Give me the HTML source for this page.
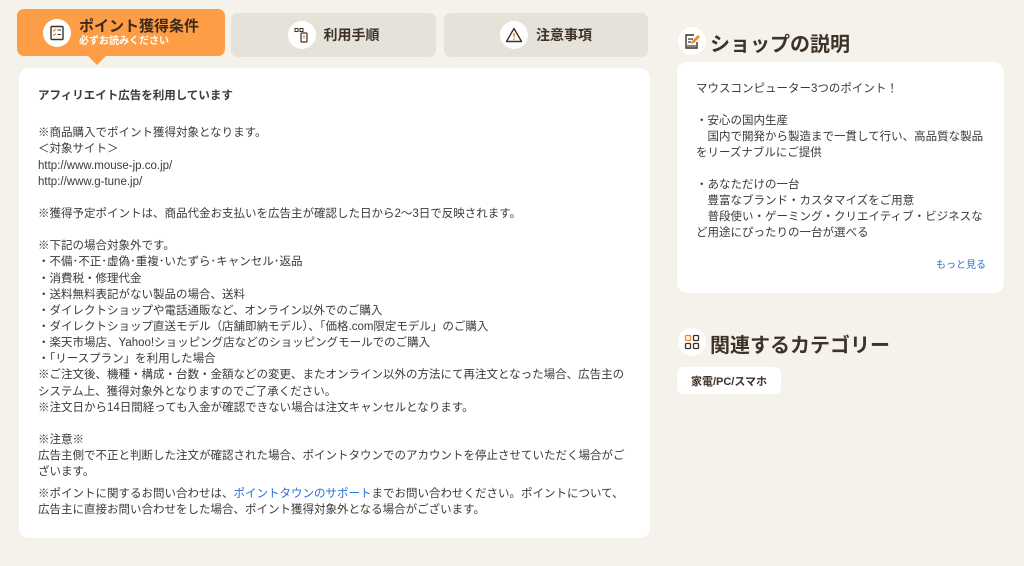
<!DOCTYPE html>
<html><head><meta charset="utf-8"><style>
*{margin:0;padding:0;box-sizing:border-box}
body{width:1024px;height:566px;background:#f5f2eb;font-family:"Liberation Sans","Noto Sans CJK JP",sans-serif;color:#3a3a3a;position:relative;overflow:hidden}
.abs{position:absolute}
.tab{position:absolute;border-radius:7px;display:flex;align-items:center;justify-content:center;font-weight:bold;font-size:14px;color:#3d3128}
.circ{width:28px;height:28px;border-radius:50%;background:#fff;display:flex;align-items:center;justify-content:center}
.card{position:absolute;background:#fff;border-radius:10px}
.t{position:absolute;font-size:11.5px;white-space:nowrap;line-height:14px}
.h{position:absolute;font-size:20px;font-weight:bold;color:#3d3128;white-space:nowrap}
</style></head><body>
<div class="tab" style="left:17px;top:9px;width:208px;height:47px;background:#fd9d45;justify-content:flex-start;padding-left:26px;color:#3d2a1a">
 <div class="circ"><svg width="16" height="16" viewBox="0 0 16 16"><rect x="2" y="1.5" width="12" height="13" rx="1" fill="none" stroke="#3d3128" stroke-width="1.4"/><path d="M4 5l1 1 2-2M4 9.5l1 1 2-2" stroke="#f08a2a" stroke-width="1.1" fill="none"/><path d="M8.5 5h3.5M8.5 9.5h3.5" stroke="#3d3128" stroke-width="1.1"/></svg></div>
 <div style="margin-left:8px;line-height:1"><div style="font-size:15px">ポイント獲得条件</div><div style="font-size:10px;color:#fff;margin-top:3px">必ずお読みください</div></div>
</div>
<div class="abs" style="left:88px;top:56px;width:0;height:0;border-left:9px solid transparent;border-right:9px solid transparent;border-top:9px solid #fd9d45"></div>
<div class="tab" style="left:231px;top:13px;width:205px;height:44px;background:#e5e2da"><div class="circ" style="margin-right:8px"><svg width="16" height="16" viewBox="0 0 16 16"><rect x="1" y="1.5" width="3" height="3" fill="none" stroke="#3d3128"/><rect x="6" y="1.5" width="3" height="3" fill="none" stroke="#3d3128"/><rect x="7" y="6" width="6" height="9" rx="1" fill="none" stroke="#3d3128" stroke-width="1.2"/><path d="M8.5 9h3M8.5 11h3" stroke="#f08a2a"/></svg></div>利用手順</div>
<div class="tab" style="left:444px;top:13px;width:204px;height:44px;background:#e5e2da"><div class="circ" style="margin-right:8px"><svg width="18" height="16" viewBox="0 0 18 16"><path d="M9 1.5L16.5 14.5H1.5Z" fill="none" stroke="#3d3128" stroke-width="1.4" stroke-linejoin="round"/><path d="M9 6v4.5" stroke="#f08a2a" stroke-width="1.5"/><circle cx="9" cy="12.3" r=".9" fill="#f08a2a"/></svg></div>注意事項</div>

<div class="card" style="left:19px;top:68px;width:631px;height:470px"></div>
<div class="t" style="left:38px;top:89px;font-weight:bold">アフィリエイト広告を利用しています</div>
<div class="t" style="left:38px;top:126px">※商品購入でポイント獲得対象となります。</div>
<div class="t" style="left:38px;top:142px">＜対象サイト＞</div>
<div class="t" style="left:38px;top:159px">http://www.mouse-jp.co.jp/</div>
<div class="t" style="left:38px;top:175px">http://www.g-tune.jp/</div>
<div class="t" style="left:38px;top:207px">※獲得予定ポイントは、商品代金お支払いを広告主が確認した日から2〜3日で反映されます。</div>
<div class="t" style="left:38px;top:239px">※下記の場合対象外です。</div>
<div class="t" style="left:38px;top:255px">・不備･不正･虚偽･重複･いたずら･キャンセル･返品</div>
<div class="t" style="left:38px;top:272px">・消費税・修理代金</div>
<div class="t" style="left:38px;top:288px">・送料無料表記がない製品の場合、送料</div>
<div class="t" style="left:38px;top:304px">・ダイレクトショップや電話通販など、オンライン以外でのご購入</div>
<div class="t" style="left:38px;top:320px">・ダイレクトショップ直送モデル（店舗即納モデル）、「価格.com限定モデル」のご購入</div>
<div class="t" style="left:38px;top:336px">・楽天市場店、Yahoo!ショッピング店などのショッピングモールでのご購入</div>
<div class="t" style="left:38px;top:352px">・「リースプラン」を利用した場合</div>
<div class="t" style="left:38px;top:368px">※ご注文後、機種・構成・台数・金額などの変更、またオンライン以外の方法にて再注文となった場合、広告主の</div>
<div class="t" style="left:38px;top:385px">システム上、獲得対象外となりますのでご了承ください。</div>
<div class="t" style="left:38px;top:401px">※注文日から14日間経っても入金が確認できない場合は注文キャンセルとなります。</div>
<div class="t" style="left:38px;top:433px">※注意※</div>
<div class="t" style="left:38px;top:449px">広告主側で不正と判断した注文が確認された場合、ポイントタウンでのアカウントを停止させていただく場合がご</div>
<div class="t" style="left:38px;top:465px">ざいます。</div>
<div class="t" style="left:38px;top:487px">※ポイントに関するお問い合わせは、<span style="color:#2a6fd6">ポイントタウンのサポート</span>までお問い合わせください。ポイントについて、</div>
<div class="t" style="left:38px;top:503px">広告主に直接お問い合わせをした場合、ポイント獲得対象外となる場合がございます。</div>

<div class="circ abs" style="left:678px;top:27px"><svg width="17" height="17" viewBox="0 0 17 17"><path d="M13 9v6H2V2h8" fill="none" stroke="#3d3128" stroke-width="1.4"/><path d="M4 6h5M4 9h3" stroke="#3d3128" stroke-width="1.2"/><path d="M7 11l1-3 6-6 2 2-6 6z" fill="#f08a2a"/><path d="M3 13h9" stroke="#3d3128" stroke-width="1.2"/></svg></div>
<div class="h" style="left:710px;top:28px">ショップの説明</div>
<div class="card" style="left:677px;top:62px;width:327px;height:231px"></div>
<div class="t" style="left:696px;top:82px">マウスコンピューター3つのポイント！</div>
<div class="t" style="left:696px;top:114px">・安心の国内生産</div>
<div class="t" style="left:696px;top:130px">　国内で開発から製造まで一貫して行い、高品質な製品</div>
<div class="t" style="left:696px;top:146px">をリーズナブルにご提供</div>
<div class="t" style="left:696px;top:178px">・あなただけの一台</div>
<div class="t" style="left:696px;top:194px">　豊富なブランド・カスタマイズをご用意</div>
<div class="t" style="left:696px;top:210px">　普段使い・ゲーミング・クリエイティブ・ビジネスな</div>
<div class="t" style="left:696px;top:226px">ど用途にぴったりの一台が選べる</div>
<div class="t" style="left:936px;top:259px;font-size:10px;color:#2a6fd6">もっと見る</div>

<div class="circ abs" style="left:678px;top:328px"><svg width="16" height="16" viewBox="0 0 16 16"><rect x="1.5" y="1.5" width="5" height="5" rx="1" fill="none" stroke="#f08a2a" stroke-width="1.3"/><rect x="9.5" y="1.5" width="5" height="5" rx="1" fill="none" stroke="#3d3128" stroke-width="1.3"/><rect x="1.5" y="9.5" width="5" height="5" rx="1" fill="none" stroke="#3d3128" stroke-width="1.3"/><rect x="9.5" y="9.5" width="5" height="5" rx="1" fill="none" stroke="#3d3128" stroke-width="1.3"/></svg></div>
<div class="h" style="left:710px;top:329px">関連するカテゴリー</div>
<div class="card" style="left:677px;top:367px;width:104px;height:27px;border-radius:6px;font-size:11px;font-weight:bold;display:flex;align-items:center;justify-content:center;color:#3d3128">家電/PC/スマホ</div>
</body></html>
